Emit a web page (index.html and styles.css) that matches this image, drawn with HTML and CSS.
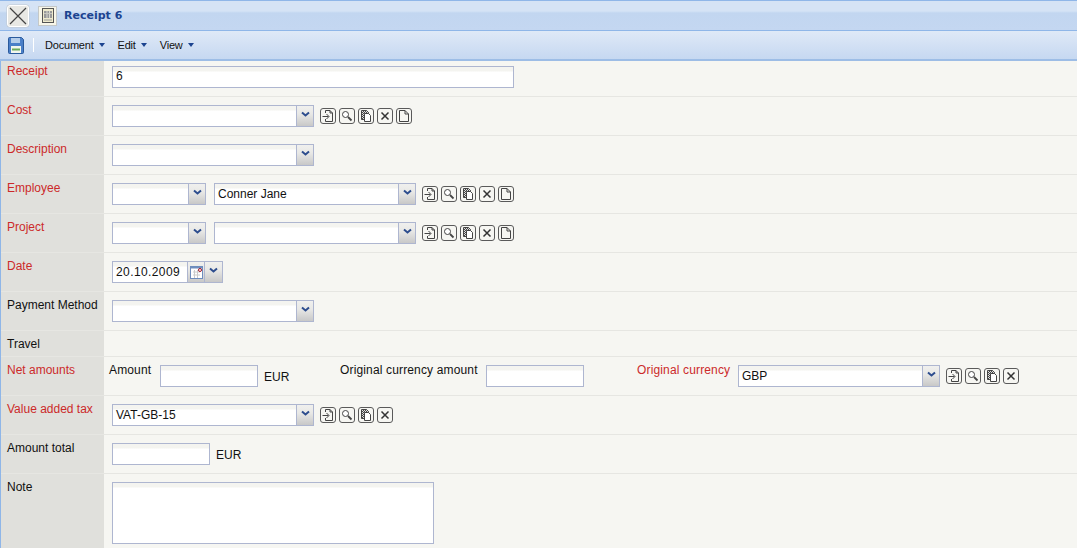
FILE: index.html
```html
<!DOCTYPE html>
<html lang="en">
<head>
<meta charset="utf-8">
<title>Receipt 6</title>
<link rel="stylesheet" href="styles.css">
</head>
<body>
<svg class="defs" width="0" height="0" aria-hidden="true">
  <defs>
    <pattern id="hatch" width="2" height="2" patternUnits="userSpaceOnUse"><rect width="2" height="2" fill="#ddd"/><rect width="1" height="1" fill="#444"/><rect x="1" y="1" width="1" height="1" fill="#444"/></pattern>
    <symbol id="frame" viewBox="0 0 16 16"><rect x=".5" y=".5" width="15" height="15" rx="2.500" fill="none" stroke="#5a5a5a"/></symbol>
    <symbol id="i-open" viewBox="0 0 16 16"><use href="#frame"/><path d="M5.500 5V2.500h4.500l2.500 2.500v8.500h-7V11M2.500 8.500h6M6.500 6l2.500 2.500L6.500 11M10 2.500V5h2.500" fill="none" stroke="#444"/></symbol>
    <symbol id="i-find" viewBox="0 0 16 16"><use href="#frame"/><circle cx="6.500" cy="6.500" r="3" fill="#fff" stroke="#444"/><path d="M9 9l3.500 3.500" stroke="#444" stroke-width="1.800"/></symbol>
    <symbol id="i-copy" viewBox="0 0 16 16"><use href="#frame"/><path d="M3.500 2.500h5l2 2v7h-7z" fill="url(#hatch)" stroke="#444"/><path d="M6.500 5.500h4l2 2v6h-6z" fill="#fff" stroke="#444"/></symbol>
    <symbol id="i-del" viewBox="0 0 16 16"><use href="#frame"/><path d="M4.500 4.500l7 7M11.500 4.500l-7 7" stroke="#333" stroke-width="1.500"/></symbol>
    <symbol id="i-new" viewBox="0 0 16 16"><use href="#frame"/><path d="M3.500 2.500h5.500l3.500 3.500v7.500h-9zM9 2.500V6h3.500" fill="none" stroke="#444"/></symbol>
    <symbol id="i-arrow" viewBox="0 0 11 7"><path d="M2 1.500l3.500 3L9 1.500" fill="none" stroke="#2d4d8e" stroke-width="2"/></symbol>
  </defs>
</svg>

<header class="titlebar">
  <button class="bigbtn" type="button" aria-label="Close">
    <svg width="20" height="20" viewBox="0 0 20 20"><path d="M2 2l16 16M18 2L2 18" stroke="#444" stroke-width="1.200"/></svg>
  </button>
  <span class="docbtn">
    <svg width="12" height="15" viewBox="0 0 12 15"><rect x=".5" y=".5" width="11" height="14" fill="#eeeacc" stroke="#555"/><rect x="2" y="3" width="8" height="7" fill="#999"/><path d="M5 3v7M7.500 3v7" stroke="#d8d8d0"/><path d="M2 5.500h8" stroke="#c8c8c0"/><path d="M2 12h8" stroke="#999"/></svg>
  </span>
  <span class="title">Receipt 6</span>
</header>

<nav class="toolbar">
  <svg class="save" width="16" height="17" viewBox="0 0 16 17"><path d="M.5 1.500a1 1 0 0 1 1-1h12l2 2v13a1 1 0 0 1-1 1h-13a1 1 0 0 1-1-1z" fill="#4a7fc8" stroke="#2a5a9c"/><rect x="3" y="1" width="9" height="5" fill="#b5cdea"/><rect x="3" y="9" width="10" height="7" fill="#f2f6ee"/><path d="M4 12.500h8" stroke="#6aaa5a" stroke-width="2"/></svg>
  <span class="sep"></span>
  <span class="menu">Document<i class="caret"></i></span>
  <span class="menu">Edit<i class="caret"></i></span>
  <span class="menu">View<i class="caret"></i></span>
</nav>

<main class="form">
  <div class="row row-first">
    <div class="label req">Receipt</div>
    <div class="content"><span class="field w402">6</span></div>
  </div>
  <div class="row">
    <div class="label req">Cost</div>
    <div class="content">
      <span class="combo w202"><span class="val"></span><span class="drop"><svg width="11" height="7"><use href="#i-arrow"/></svg></span></span>
      <span class="icons"><svg><use href="#i-open"/></svg><svg><use href="#i-find"/></svg><svg><use href="#i-copy"/></svg><svg><use href="#i-del"/></svg><svg><use href="#i-new"/></svg></span>
    </div>
  </div>
  <div class="row">
    <div class="label req">Description</div>
    <div class="content">
      <span class="combo w202"><span class="val"></span><span class="drop"><svg width="11" height="7"><use href="#i-arrow"/></svg></span></span>
    </div>
  </div>
  <div class="row">
    <div class="label req">Employee</div>
    <div class="content">
      <span class="combo w94"><span class="val"></span><span class="drop"><svg width="11" height="7"><use href="#i-arrow"/></svg></span></span>
      <span class="combo w202 ml8"><span class="val">Conner Jane</span><span class="drop"><svg width="11" height="7"><use href="#i-arrow"/></svg></span></span>
      <span class="icons"><svg><use href="#i-open"/></svg><svg><use href="#i-find"/></svg><svg><use href="#i-copy"/></svg><svg><use href="#i-del"/></svg><svg><use href="#i-new"/></svg></span>
    </div>
  </div>
  <div class="row">
    <div class="label req">Project</div>
    <div class="content">
      <span class="combo w94"><span class="val"></span><span class="drop"><svg width="11" height="7"><use href="#i-arrow"/></svg></span></span>
      <span class="combo w202 ml8"><span class="val"></span><span class="drop"><svg width="11" height="7"><use href="#i-arrow"/></svg></span></span>
      <span class="icons"><svg><use href="#i-open"/></svg><svg><use href="#i-find"/></svg><svg><use href="#i-copy"/></svg><svg><use href="#i-del"/></svg><svg><use href="#i-new"/></svg></span>
    </div>
  </div>
  <div class="row">
    <div class="label req">Date</div>
    <div class="content">
      <span class="combo w111">
        <span class="val date">20.10.2009</span>
        <span class="drop cal"><svg width="13" height="13" viewBox="0 0 13 13"><rect x=".5" y=".5" width="12" height="12" fill="#fff" stroke="#6f8dbd"/><path d="M.5 1.500h12" stroke="#6f8dbd" stroke-width="2"/><path d="M3 6h7M3 9h7M4.500 4v8M7.500 4v8" stroke="#ccc"/><circle cx="10" cy="4" r="1.500" fill="#fff" stroke="#a01020"/></svg></span>
        <span class="drop dd"><svg width="11" height="7"><use href="#i-arrow"/></svg></span>
      </span>
    </div>
  </div>
  <div class="row">
    <div class="label">Payment Method</div>
    <div class="content">
      <span class="combo w202"><span class="val"></span><span class="drop"><svg width="11" height="7"><use href="#i-arrow"/></svg></span></span>
    </div>
  </div>
  <div class="row row-short">
    <div class="label">Travel</div>
    <div class="content"></div>
  </div>
  <div class="row">
    <div class="label req">Net amounts</div>
    <div class="content net">
      <span class="lbl amount">Amount</span>
      <span class="field w98"></span>
      <span class="unit">EUR</span>
      <span class="lbl orig">Original currency amount</span>
      <span class="field w98"></span>
      <span class="lbl req curr">Original currency</span>
      <span class="combo w202"><span class="val">GBP</span><span class="drop"><svg width="11" height="7"><use href="#i-arrow"/></svg></span></span>
      <span class="icons"><svg><use href="#i-open"/></svg><svg><use href="#i-find"/></svg><svg><use href="#i-copy"/></svg><svg><use href="#i-del"/></svg></span>
    </div>
  </div>
  <div class="row">
    <div class="label req">Value added tax</div>
    <div class="content">
      <span class="combo w202"><span class="val">VAT-GB-15</span><span class="drop"><svg width="11" height="7"><use href="#i-arrow"/></svg></span></span>
      <span class="icons"><svg><use href="#i-open"/></svg><svg><use href="#i-find"/></svg><svg><use href="#i-copy"/></svg><svg><use href="#i-del"/></svg></span>
    </div>
  </div>
  <div class="row">
    <div class="label">Amount total</div>
    <div class="content">
      <span class="field w98"></span>
      <span class="unit">EUR</span>
    </div>
  </div>
  <div class="row row-note">
    <div class="label">Note</div>
    <div class="content"><span class="area"></span></div>
  </div>
</main>
</body>
</html>
```

FILE: styles.css
```css
* { box-sizing: border-box; }
html, body { margin: 0; padding: 0; height: 548px; overflow: hidden; }
body {
  font-family: "Liberation Sans", sans-serif;
  font-size: 12px;
  color: #111;
  background: #f6f6f2;
}
.defs { position: absolute; }

.titlebar {
  height: 31px;
  display: flex;
  align-items: center;
  padding: 0 0 0 7px;
  border-top: 1px solid #8fb6e8;
  border-bottom: 1px solid #8fb6e8;
  background: linear-gradient(#d5e3f5 0, #d5e3f5 10px, #c2d6f0 12px, #c4d7f1 100%);
}
.bigbtn {
  width: 22px; height: 22px; padding: 0;
  display: flex; align-items: center; justify-content: center;
  background: #e8e8e4;
  border: 1px solid #fff;
  border-radius: 3px;
  box-shadow: 0 0 0 .5px #c0c8d0;
}
.docbtn {
  width: 19px; height: 20px; margin-left: 9px;
  display: flex; align-items: center; justify-content: center;
  background: #f8f6e8;
  border: 1px solid #c4c8c8;
}
.title { margin-left: 7px; font-family: "DejaVu Sans", sans-serif; font-weight: 700; color: #1c4490; font-size: 11px; }

.toolbar {
  height: 30px;
  display: flex;
  align-items: center;
  padding-left: 8px;
  background: linear-gradient(#dfe9f7, #c6d8f1);
  border-bottom: 2px solid #9dbde6;
}
.save { flex: none; }
.sep { width: 1px; height: 14px; margin: 0 11px 0 9px; background: #fff; }
.menu { display: inline-flex; align-items: center; margin-right: 13px; font-size: 11px; letter-spacing: -.2px; }
.caret {
  width: 0; height: 0; margin-left: 5px;
  border-left: 3px solid transparent;
  border-right: 3px solid transparent;
  border-top: 4px solid #1c4490;
}

.form { border-left: 1px solid #8fb6e8; }
.row {
  display: flex;
  height: 39px;
  border-bottom: 1px solid #e6e6e2;
}
.row-first { height: 36px; }
.row-first .content { padding-top: 5px; }
.row-first .label { padding-top: 3px; }
.row-short { height: 26px; }
.row-note { height: 75px; border-bottom: 0; }
.label {
  flex: none;
  width: 103px;
  padding: 6px 0 0 6px;
  background: #e0e0dc;
  line-height: 15px;
}
.req { color: #cc2a2a; }
.content {
  flex: 1;
  display: flex;
  align-items: flex-start;
  padding: 8px 0 0 8px;
  background: #f6f6f2;
}

.field, .combo, .area {
  flex: none;
  height: 22px;
  border: 1px solid #aeb6d0;
  background: linear-gradient(#f4f4f0 0, #f4f4f0 4px, #fff 5px);
}
.field { display: block; padding: 0 3px; line-height: 19px; }
.w402 { width: 402px; }
.w98 { width: 98px; }
.combo { display: flex; }
.w202 { width: 202px; }
.w94 { width: 94px; }
.w111 { width: 111px; }
.ml8 { margin-left: 8px; }
.val { flex: 1; min-width: 0; padding: 0 3px; line-height: 20px; white-space: nowrap; }
.date { letter-spacing: .4px; }
.drop {
  flex: none;
  width: 17px;
  display: flex; align-items: center; justify-content: center;
  padding-bottom: 3px;
  border-left: 1px solid #aeb6d0;
  background: linear-gradient(#f0f0ee 0, #e8e8e6 40%, #c8c8c8 100%);
}
.cal { width: 17px; padding-bottom: 0; }
.dd { width: 18px; }

.icons { display: flex; gap: 3px; margin-left: 6px; padding-top: 3px; }
.icons svg { width: 16px; height: 16px; flex: none; }

.unit { margin: 5px 0 0 6px; line-height: 15px; }
.lbl { line-height: 15px; white-space: nowrap; }
.net { padding-left: 5px; }
.net .lbl { letter-spacing: .15px; }
.amount { margin: -2px 8px 0 0; width: 43px; }
.net .unit { width: 25px; margin-right: 51px; }
.orig { margin: -2px 8px 0 0; width: 138px; }
.curr { margin: -2px 8px 0 53px; width: 93px; }

.area { display: block; width: 322px; height: 62px; }
```
